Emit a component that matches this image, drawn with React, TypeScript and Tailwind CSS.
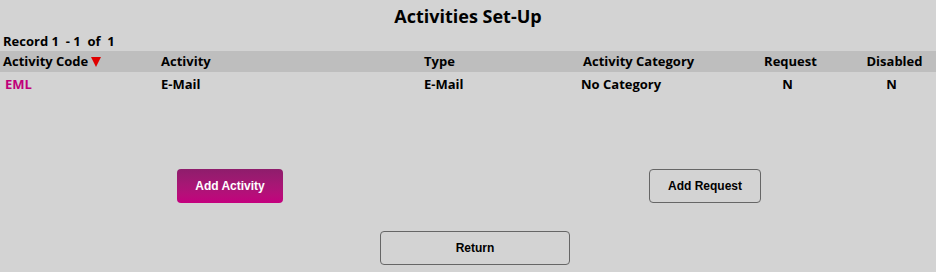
export default function App() {
  const rows = [
    { code: "EML", activity: "E-Mail", type: "E-Mail", category: "No Category", request: "N", disabled: "N" },
  ];

  return (
    <div className="w-[936px] h-[272px] bg-[#d3d3d3] text-black font-['Open_Sans',sans-serif] font-bold overflow-hidden">
      <h1 className="text-center text-[18px] leading-[24px] pt-[4px] h-[32px]">Activities Set-Up</h1>

      <div className="px-[3px] text-[13px] leading-[19px]">Record 1&nbsp; - 1&nbsp; of&nbsp; 1</div>

      {/* Header */}
      <div className="grid grid-cols-[158px_263px_159px_154px_113px_89px] h-[21px] items-center bg-[#bebebe] text-[13px]">
        <div className="pl-[3px] flex items-center gap-[3px]">
          Activity Code
          <span className="w-0 h-0 border-l-[5px] border-r-[5px] border-t-[10px] border-l-transparent border-r-transparent border-t-[#e00000]" />
        </div>
        <div className="pl-[3px]">Activity</div>
        <div className="pl-[3px]">Type</div>
        <div className="pl-[3px]">Activity Category</div>
        <div className="text-center">Request</div>
        <div className="text-center pl-[6px]">Disabled</div>
      </div>

      {rows.map((r) => (
        <div key={r.code} className="grid grid-cols-[158px_263px_159px_154px_113px_89px] h-[26px] items-center text-[13px]">
          <div className="pl-[5px] text-[#c0007a]">{r.code}</div>
          <div className="pl-[3px]">{r.activity}</div>
          <div className="pl-[3px]">{r.type}</div>
          <div className="pl-[1px]">{r.category}</div>
          <div className="text-center pr-[6px]">{r.request}</div>
          <div className="text-center">{r.disabled}</div>
        </div>
      ))}

      <div className="flex mt-[71px] font-['Liberation_Sans',sans-serif] text-[12px]">
        <button className="ml-[177px] w-[106px] h-[34px] rounded-[4px] text-white bg-gradient-to-b from-[#8e1d6c] to-[#c4007e] font-bold">
          Add Activity
        </button>
        <button className="ml-[366px] w-[112px] h-[34px] rounded-[4px] border border-[#666] text-black font-bold">
          Add Request
        </button>
      </div>

      <div className="flex mt-[28px] font-['Liberation_Sans',sans-serif] text-[12px]">
        <button className="ml-[380px] w-[190px] h-[34px] rounded-[4px] border border-[#666] text-black font-bold">
          Return
        </button>
      </div>
    </div>
  );
}
